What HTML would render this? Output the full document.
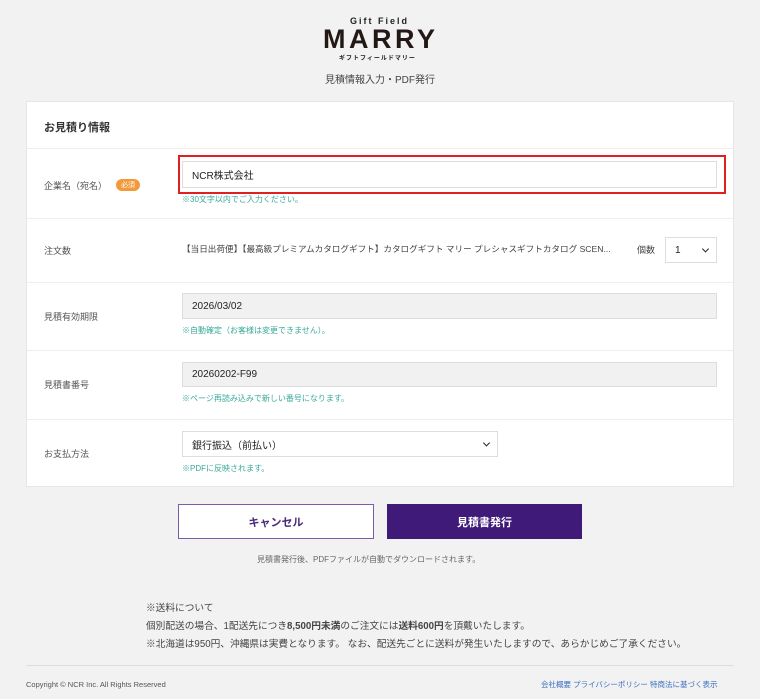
<!DOCTYPE html>
<html><head><meta charset="utf-8"><style>
*{margin:0;padding:0;box-sizing:border-box}
body{width:760px;height:699px;background:#f2f2f2;font-family:"Liberation Sans","Noto Sans CJK JP",sans-serif;position:relative;overflow:hidden;color:#333}
.a{position:absolute;white-space:nowrap}
.card{position:absolute;left:26px;top:101px;width:708px;height:386px;background:#fff;border:1px solid #e6e6e6}
.line{position:absolute;left:0;width:706px;height:1px;background:#eee}
.lbl{font-size:9px;color:#555}
.note{font-size:8px;color:#3aa99a}
.inp{position:absolute;border:1px solid #ddd;background:#fff;font-size:10px;color:#222;padding-left:9px;display:flex;align-items:center}
.gray{background:#f1f1f1}
.chev{position:absolute;right:8px;top:50%;width:5px;height:5px;border-right:1.5px solid #222;border-bottom:1.5px solid #222;transform:translateY(-70%) rotate(45deg)}
</style></head><body>
<div class="a" style="left:350px;top:16px;font-size:9px;font-weight:bold;letter-spacing:2px;color:#222">Gift Field</div>
<div class="a" style="left:323px;top:24px;font-size:27px;font-weight:bold;letter-spacing:3.5px;color:#231815">MARRY</div>
<div class="a" style="left:339px;top:53px;font-size:6px;font-weight:bold;letter-spacing:1px;color:#222">ギフトフィールドマリー</div>
<div class="a" style="left:325px;top:71px;font-size:10px;color:#444">見積情報入力・PDF発行</div>

<div class="card">
 <div class="a" style="left:17px;top:17px;font-size:11px;font-weight:bold;color:#333">お見積り情報</div>
 <div class="line" style="top:46px"></div>
 <div class="a lbl" style="left:17px;top:77px">企業名（宛名）</div>
 <div class="a" style="left:89px;top:77px;background:#f29a3a;color:#fff;font-size:7px;border-radius:6px;padding:1px 5px">必須</div>
 <div class="a" style="left:151px;top:53px;width:548px;height:39px;border:2px solid #e02020"></div>
 <div class="inp" style="left:155px;top:59px;width:535px;height:27px">NCR株式会社</div>
 <div class="a note" style="left:155px;top:92px">※30文字以内でご入力ください。</div>
 <div class="line" style="top:116px"></div>
 <div class="a lbl" style="left:17px;top:142px">注文数</div>
 <div class="a" style="left:155px;top:141px;font-size:8.6px;color:#444">【当日出荷便】【最高級プレミアムカタログギフト】カタログギフト マリー プレシャスギフトカタログ SCEN...</div>
 <div class="a" style="left:610px;top:141px;font-size:9px;color:#444">個数</div>
 <div class="inp" style="left:638px;top:135px;width:52px;height:26px">1<span class="chev"></span></div>
 <div class="line" style="top:180px"></div>
 <div class="a lbl" style="left:17px;top:208px">見積有効期限</div>
 <div class="inp gray" style="left:155px;top:191px;width:535px;height:26px">2026/03/02</div>
 <div class="a note" style="left:155px;top:223px">※自動確定（お客様は変更できません）。</div>
 <div class="line" style="top:248px"></div>
 <div class="a lbl" style="left:17px;top:276px">見積書番号</div>
 <div class="inp gray" style="left:155px;top:260px;width:535px;height:25px">20260202-F99</div>
 <div class="a note" style="left:155px;top:291px">※ページ再読み込みで新しい番号になります。</div>
 <div class="line" style="top:317px"></div>
 <div class="a lbl" style="left:17px;top:345px">お支払方法</div>
 <div class="inp" style="left:155px;top:329px;width:316px;height:26px">銀行振込（前払い）<span class="chev"></span></div>
 <div class="a note" style="left:155px;top:361px">※PDFに反映されます。</div>
</div>

<div class="a" style="left:178px;top:504px;width:196px;height:35px;border:1px solid #7a5ca8;background:#fff;color:#4a2a7a;font-size:11px;font-weight:bold;display:flex;align-items:center;justify-content:center">キャンセル</div>
<div class="a" style="left:387px;top:504px;width:195px;height:35px;background:#3f1a78;color:#fff;font-size:11px;font-weight:bold;display:flex;align-items:center;justify-content:center">見積書発行</div>
<div class="a" style="left:257px;top:554px;font-size:8px;color:#666">見積書発行後、PDFファイルが自動でダウンロードされます。</div>

<div class="a" style="left:146px;top:600px;font-size:9.7px;color:#444;line-height:18px">※送料について<br>個別配送の場合、1配送先につき<b>8,500円未満</b>のご注文には<b>送料600円</b>を頂戴いたします。<br>※北海道は950円、沖縄県は実費となります。 なお、配送先ごとに送料が発生いたしますので、あらかじめご了承ください。</div>
<div class="a" style="left:26px;top:665px;width:708px;height:1px;background:#ddd"></div>
<div class="a" style="left:26px;top:680px;font-size:7.5px;color:#555">Copyright © NCR Inc. All Rights Reserved</div>
<div class="a" style="left:541px;top:679px;font-size:7.5px;color:#3a6fc0">会社概要 プライバシーポリシー 特商法に基づく表示</div>
</body></html>
